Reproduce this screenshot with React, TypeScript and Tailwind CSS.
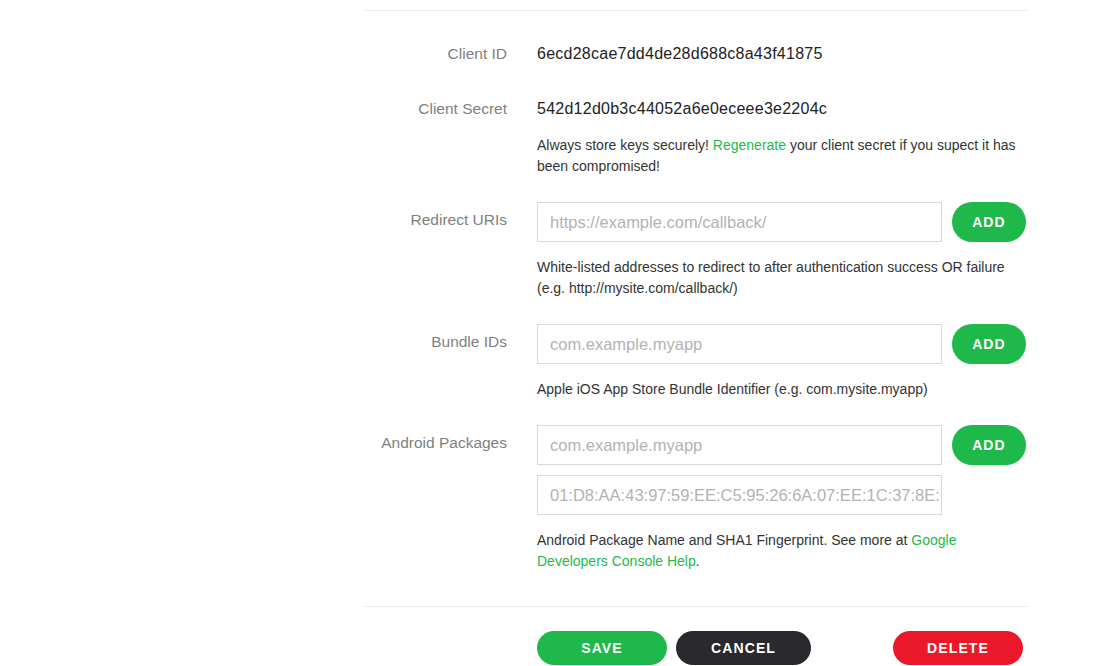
const font = { fontFamily: '"Liberation Sans", Arial, sans-serif' };

function Label({ children, pad = false }: { children: React.ReactNode; pad?: boolean }) {
  return (
    <div
      className={`w-[143px] shrink-0 text-right text-[15.5px] leading-[22px] text-[#7f7f7f] ${pad ? "pt-[7px]" : ""}`}
    >
      {children}
    </div>
  );
}

function Field({ placeholder }: { placeholder: string }) {
  return (
    <input
      readOnly
      placeholder={placeholder}
      className="h-10 w-[405px] border border-[#d9d9d9] bg-white pl-3 pr-0 text-[16.5px] text-[#222] placeholder:text-[#b3b3b3] outline-none"
    />
  );
}

function AddButton() {
  return (
    <button className="h-10 w-[74px] rounded-full bg-[#1fb84b] text-[14px] font-bold tracking-[0.08em] text-white">
      ADD
    </button>
  );
}

function Help({ children }: { children: React.ReactNode }) {
  return <p className="text-[14px] leading-[21px] text-[#333]">{children}</p>;
}

export default function App() {
  return (
    <div className="min-h-screen bg-white" style={font}>
      <div className="ml-[364px] w-[664px] pt-[10px]">
        <div className="border-t border-[#ebebeb]" />

        {/* Client ID */}
        <div className="mt-[32px] flex gap-[30px]">
          <Label>Client ID</Label>
          <div className="text-[16px] leading-[22px] tracking-[0.25px] text-[#222]">6ecd28cae7dd4de28d688c8a43f41875</div>
        </div>

        {/* Client Secret */}
        <div className="mt-[33px] flex gap-[30px]">
          <Label>Client Secret</Label>
          <div>
            <div className="text-[16px] leading-[22px] tracking-[0.25px] text-[#222]">542d12d0b3c44052a6e0eceee3e2204c</div>
            <div className="mt-[15px] pr-[8px]">
              <Help>
                Always store keys securely! <a href="#" className="text-[#1fb84b]">Regenerate</a> your client
                secret if you supect it has been compromised!
              </Help>
            </div>
          </div>
        </div>

        {/* Redirect URIs */}
        <div className="mt-[25px] flex gap-[30px]">
          <Label pad>Redirect URIs</Label>
          <div className="flex-1">
            <div className="flex gap-[10px]">
              <Field placeholder="https://example.com/callback/" />
              <AddButton />
            </div>
            <div className="mt-[15px]">
              <Help>
                White-listed addresses to redirect to after authentication success OR failure
                <br />
                (e.g. http://mysite.com/callback/)
              </Help>
            </div>
          </div>
        </div>

        {/* Bundle IDs */}
        <div className="mt-[25px] flex gap-[30px]">
          <Label pad>Bundle IDs</Label>
          <div className="flex-1">
            <div className="flex gap-[10px]">
              <Field placeholder="com.example.myapp" />
              <AddButton />
            </div>
            <div className="mt-[15px]">
              <Help>Apple iOS App Store Bundle Identifier (e.g. com.mysite.myapp)</Help>
            </div>
          </div>
        </div>

        {/* Android Packages */}
        <div className="mt-[25px] flex gap-[30px]">
          <Label pad>Android Packages</Label>
          <div className="flex-1">
            <div className="flex gap-[10px]">
              <Field placeholder="com.example.myapp" />
              <AddButton />
            </div>
            <div className="mt-[10px]">
              <Field placeholder="01:D8:AA:43:97:59:EE:C5:95:26:6A:07:EE:1C:37:8E:F" />
            </div>
            <div className="mt-[15px]">
              <Help>
                Android Package Name and SHA1 Fingerprint. See more at{" "}
                <a href="#" className="text-[#1fb84b]">Google</a>
                <br />
                <a href="#" className="text-[#1fb84b]">Developers Console Help</a>.
              </Help>
            </div>
          </div>
        </div>

        <div className="mt-[34px] border-t border-[#ebebeb]" />

        {/* Actions */}
        <div className="mt-[24px] flex items-center pl-[173px] pr-[5px]">
          <button className="h-[34px] w-[130px] rounded-full bg-[#1fb84b] text-[14px] font-bold tracking-[0.08em] text-white">
            SAVE
          </button>
          <button className="ml-[9px] h-[34px] w-[135px] rounded-full bg-[#2a292e] text-[14px] font-bold tracking-[0.08em] text-white">
            CANCEL
          </button>
          <button className="ml-auto h-[34px] w-[130px] rounded-full bg-[#eb1829] text-[14px] font-bold tracking-[0.08em] text-white">
            DELETE
          </button>
        </div>
      </div>
    </div>
  );
}
